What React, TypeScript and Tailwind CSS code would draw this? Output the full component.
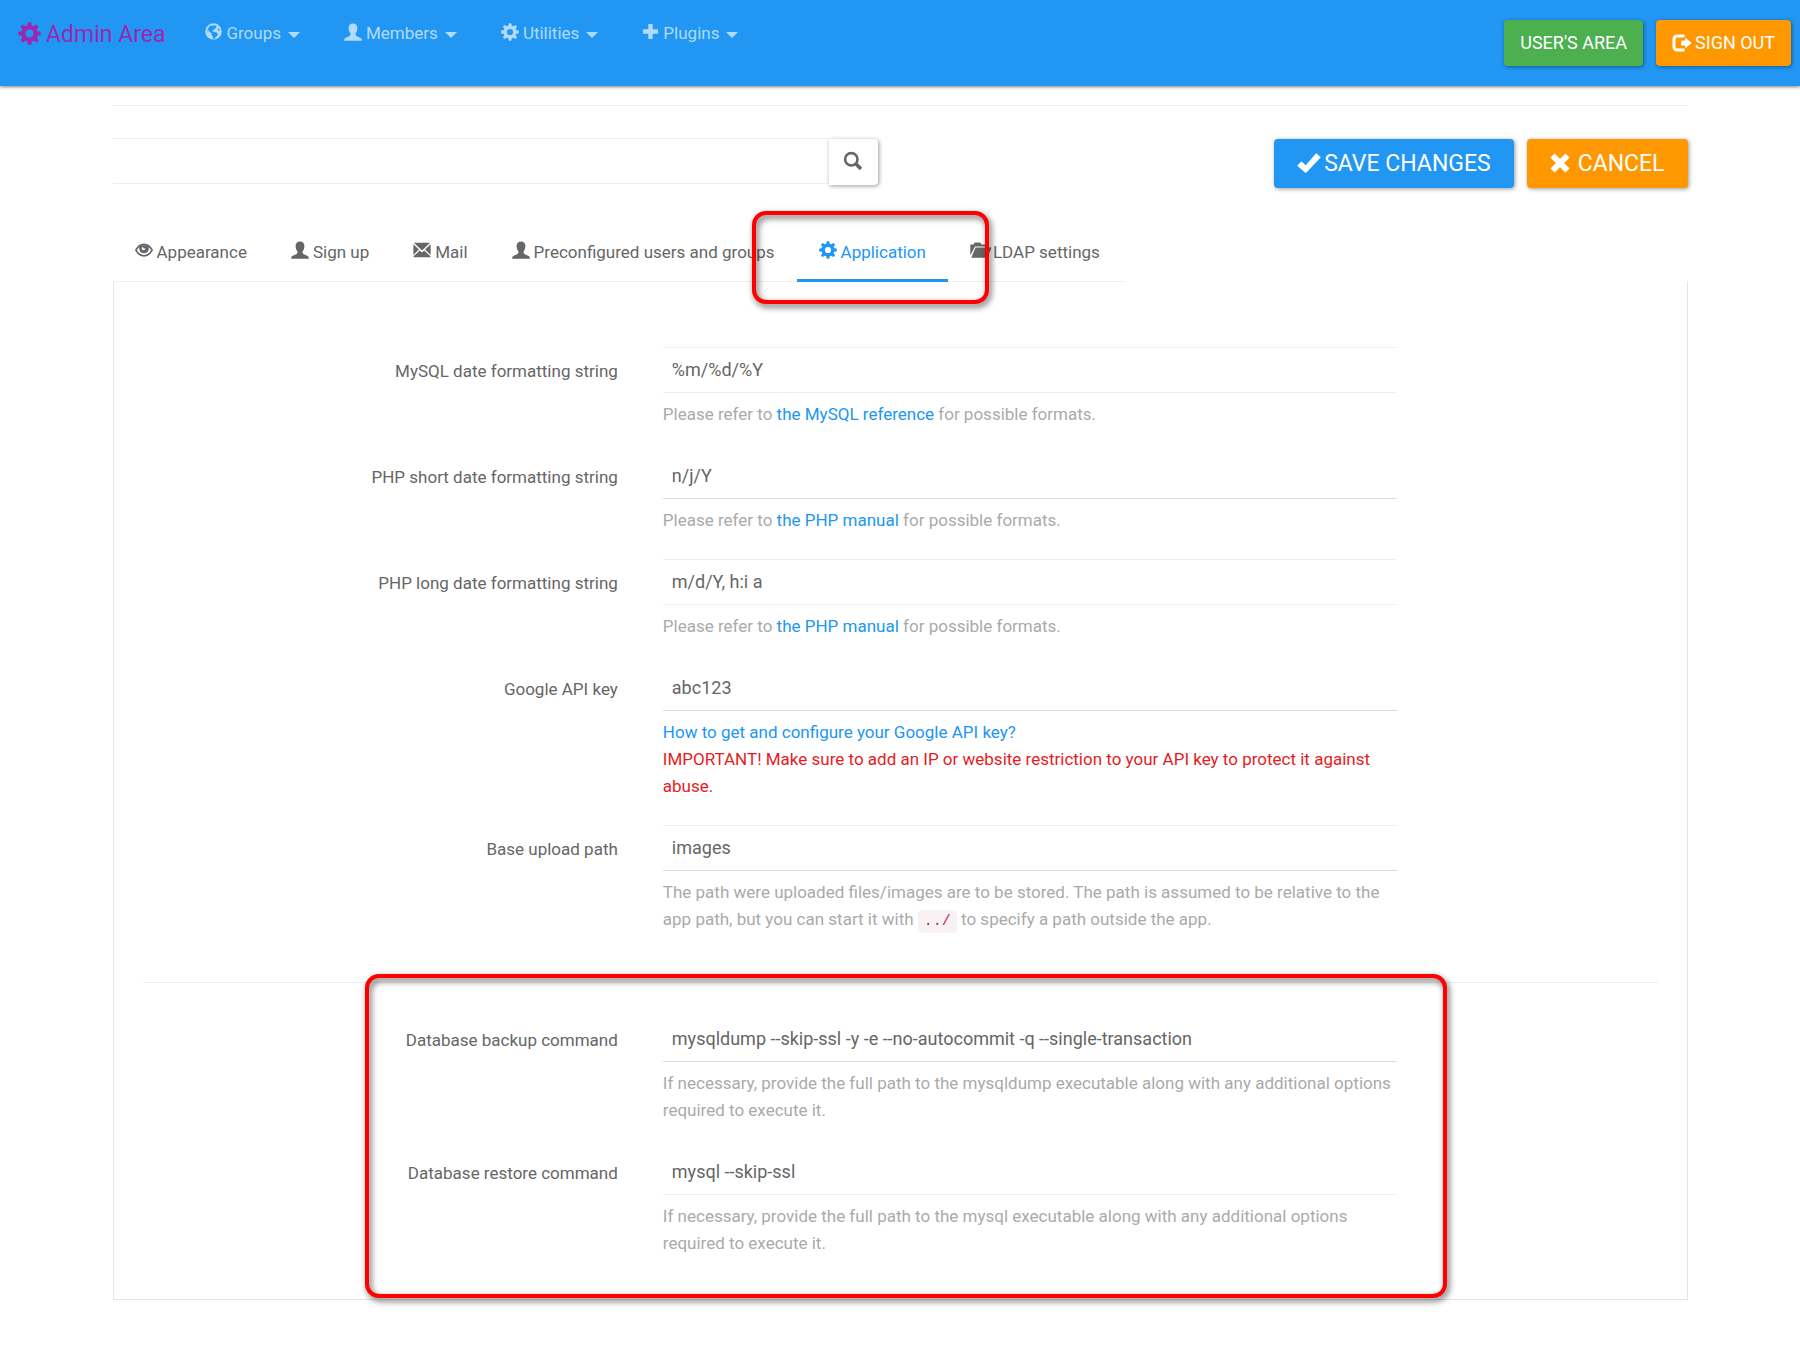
import React from "react";

type IconProps = { className?: string };

const TEETH = [0, 45, 90, 135, 180, 225, 270, 315];

function Gear({ className = "size-[18px]" }: IconProps) {
  return (
    <svg viewBox="0 0 18 18" className={className} fill="currentColor" aria-hidden="true">
      <circle cx="9" cy="9" r="4.8" fill="none" stroke="currentColor" strokeWidth="3.4" />
      {TEETH.map((a) => (
        <path key={a} d="M7 4 L7.6 .7 Q7.7 .2 8.2 .2 H9.8 Q10.3 .2 10.4 .7 L11 4 Z" transform={`rotate(${a} 9 9)`} />
      ))}
    </svg>
  );
}

function User() {
  return (
    <svg viewBox="0 0 18 18" className="size-[18px]" fill="currentColor" aria-hidden="true">
      <path d="M9 .4C6.2.4 4.6 2.2 4.6 5c0 2.2.6 4 1.8 5.200v1.300c0 .8-.4 1.300-1.200 1.700l-3.400 1.600C.7 15.300.2 15.900.2 17v.7h17.600V17c0-1.100-.5-1.700-1.600-2.200l-3.400-1.600c-.8-.4-1.200-.9-1.200-1.700v-1.300c1.200-1.200 1.800-3 1.800-5.200C13.400 2.200 11.800.4 9 .4z" />
    </svg>
  );
}

function Globe() {
  return (
    <svg viewBox="0 0 18 18" className="size-[17px]" aria-hidden="true">
      <circle cx="9" cy="9" r="8.700" fill="currentColor" />
      <path
        fill="#2196f3"
        d="M6.200 2.600l1.500.7 1.100-.9 1.300.6 1.500-.5.9 1.200-1 .6.3 1.200-1.600.3-.9 1.500-1.400.4.3 1.300 1.700.5 2.400.6 1.400 1.500-1.100 2.400-1.700 1-.6 1.800-1.600.3-.3-2.600-1.500-1.900.3-1.700-1.600-.8-1.300-1.700-1-1.800.2 2.600-.9-.4c-.1-2.300 1.300-5 3.600-6.200zM13.600 5.600l1.600 1 .5 2-1.300-.6-1-1.200z"
      />
    </svg>
  );
}

function Plus() {
  return (
    <svg viewBox="0 0 18 18" className="size-[17px]" fill="currentColor" aria-hidden="true">
      <path d="M7.200 1h3.600q.5 0 .5.500v5.200h5.200q.5 0 .5.500v3.600q0 .5-.5.500h-5.200v5.200q0 .5-.5.500H7.200q-.5 0-.5-.5v-5.200H1.500q-.5 0-.5-.5V7.200q0-.5.500-.5h5.200V1.500q0-.5.500-.5z" />
    </svg>
  );
}

function Eye() {
  return (
    <svg viewBox="0 0 18 18" className="size-[18px]" aria-hidden="true">
      <path
        d="M.9 9.200C2.600 5.900 5.500 3.300 9 3.300s6.400 2.600 8.100 5.900C15.400 12.500 12.500 14.800 9 14.800S2.600 12.500.9 9.200z"
        fill="none"
        stroke="currentColor"
        strokeWidth="1.700"
      />
      <path d="M4.700 4.300h8.600c1.300 3.600.4 8-4.300 8S3.400 7.900 4.700 4.300z" fill="currentColor" />
      <path d="M6.600 7.200l1.200-1.500 1 1.800 1.600-.2c0 1.200-.9 1.900-1.900 1.900s-1.900-.8-1.900-2z" fill="#fff" />
    </svg>
  );
}

function Mail() {
  return (
    <svg viewBox="0 0 18 18" className="size-[18px]" fill="currentColor" aria-hidden="true">
      <path d="M.9 1.700h16.200L9 9.600z" />
      <path d="M.4 3.200l5.500 5.400L.4 14z" />
      <path d="M17.600 3.200l-5.500 5.400 5.500 5.400z" />
      <path d="M.6 15.300L6.800 9.400 9 11.500l2.200-2.100 6.200 5.900v1H.6z" />
    </svg>
  );
}

function FolderOpen() {
  return (
    <svg viewBox="0 0 22 18" className="h-[18px] w-[22px]" fill="currentColor" aria-hidden="true">
      <path d="M.3 14.500V3.500h3.200l1.200-2h5.600l1.200 2h4.200v1.900H5z" />
      <path d="M5.500 6.400h16l-4.300 10.400H1.300z" />
    </svg>
  );
}

function SearchIcon() {
  return (
    <svg viewBox="0 0 20 20" className="size-5" fill="none" stroke="currentColor" aria-hidden="true">
      <circle cx="8.300" cy="8.300" r="6.200" strokeWidth="2.600" />
      <path d="M12.600 12.600l5.400 5.400" strokeWidth="3.600" />
    </svg>
  );
}

function LogOut() {
  return (
    <svg viewBox="0 0 20 18" className="h-[18px] w-5" aria-hidden="true">
      <path d="M12.500 2H5.500Q2 2 2 5.500v7Q2 16 5.500 16h7" fill="none" stroke="currentColor" strokeWidth="3" />
      <path d="M9.200 6.600h4V3.400L19.700 9l-6.500 5.600v-3.200h-4z" fill="currentColor" />
    </svg>
  );
}

function Check() {
  return (
    <svg viewBox="0 0 24 22" className="h-[22px] w-6" fill="currentColor" aria-hidden="true">
      <path d="M.5 13.200l3.600-3.500q.4-.4.800 0l3.800 3.600L18.900 1.600q.4-.4.800 0l3.700 3.300q.4.400 0 .8L9.200 20.800q-.4.400-.8 0L.5 14q-.4-.4 0-.8z" />
    </svg>
  );
}

function Remove() {
  return (
    <svg viewBox="0 0 20 20" className="size-5" aria-hidden="true">
      <path d="M2.500 2.500l15 15M17.500 2.500l-15 15" stroke="currentColor" strokeWidth="6" />
    </svg>
  );
}

function Callout({ className }: { className: string }) {
  return (
    <div
      aria-hidden="true"
      className={`pointer-events-none absolute z-10 rounded-[14px] border-4 border-[#ff0000] drop-shadow-[2px_3px_3px_rgba(0,0,0,0.65)] ${className}`}
    />
  );
}

const menus = [
  { label: "Groups", icon: <Globe /> },
  { label: "Members", icon: <User /> },
  { label: "Utilities", icon: <Gear /> },
  { label: "Plugins", icon: <Plus /> },
];

const tabs = [
  { label: "Appearance", icon: <Eye /> },
  { label: "Sign up", icon: <User /> },
  { label: "Mail", icon: <Mail /> },
  { label: "Preconfigured users and groups", icon: <User /> },
  { label: "Application", icon: <Gear />, active: true },
  { label: "LDAP settings", icon: <FolderOpen />, tight: true },
];

function Field({
  id,
  label,
  value,
  lines,
  children,
}: {
  id: string;
  label: string;
  value: string;
  lines: string;
  children: React.ReactNode;
}) {
  return (
    <div className="mb-[25px] grid grid-cols-[475fr_734fr_215fr] gap-x-[45px]">
      <label htmlFor={id} className="pt-[11px] text-right">
        {label}
      </label>
      <div>
        <input
          id={id}
          type="text"
          defaultValue={value}
          className={`block h-[46px] w-full border-y bg-transparent px-[9px] pb-px text-lg outline-none ${lines}`}
        />
        <p className="mt-2 text-[#aaaaaa]">{children}</p>
      </div>
    </div>
  );
}

function Link({ children }: { children: React.ReactNode }) {
  return (
    <a href="#" className="text-[#2196f3]">
      {children}
    </a>
  );
}

export default function App() {
  return (
    <div className="min-h-screen bg-white font-['Roboto',sans-serif] text-[17px] leading-[27px] text-[#666666]">
      <header className="flex h-[86px] items-start bg-[#2196f3] pr-[9px] pl-[18px] shadow-[0_1px_3px_rgba(0,0,0,0.5)]">
        <a href="#" className="flex items-center gap-[5px] pt-5 text-[23px] leading-[30px] text-[#9c27b0]">
          <Gear className="mb-1 size-[23px]" />
          Admin Area
        </a>
        <nav className="ml-[18px] flex pt-5">
          {menus.map((m) => (
            <button key={m.label} type="button" className="flex items-center px-[22px] text-[#b2dbfb]">
              <span className="pb-1">{m.icon}</span>
              <span className="ml-1">{m.label}</span>
              <svg viewBox="0 0 12 6" className="mt-0.5 ml-[7px] h-1.5 w-3" fill="currentColor" aria-hidden="true">
                <path d="M0 0h12L6 6z" />
              </svg>
            </button>
          ))}
        </nav>
        <div className="ml-auto flex gap-[13px] pt-5 text-lg text-white">
          <button type="button" className="h-[46px] rounded bg-[#4caf50] px-4 shadow-[1px_1px_4px_rgba(0,0,0,0.4)]">
            USER'S AREA
          </button>
          <button
            type="button"
            className="flex h-[46px] items-center gap-[3px] rounded bg-[#ff9800] px-4 shadow-[1px_1px_4px_rgba(0,0,0,0.4)]"
          >
            <LogOut />
            SIGN OUT
          </button>
        </div>
      </header>

      <main className="mx-auto w-7/8 pt-[19px]">
        <hr className="border-[#eeeeee]" />
        <div className="mt-8 flex items-start justify-between">
          <form className="flex w-[765px] items-start" onSubmit={(e) => e.preventDefault()}>
            <input
              type="search"
              aria-label="Search settings"
              className="h-[46px] min-w-0 flex-1 border-y border-[#eeeeee] px-[9px] text-lg outline-none"
            />
            <button
              type="submit"
              aria-label="Search"
              className="mt-px flex h-[46px] w-[49px] items-center justify-center rounded-r bg-white pb-0.5 shadow-[1px_1px_4px_rgba(0,0,0,0.4)]"
            >
              <SearchIcon />
            </button>
          </form>
          <div className="mt-px flex gap-[13px] text-[23px] text-white">
            <button
              type="button"
              className="flex h-[49px] items-center gap-[3px] rounded bg-[#2196f3] px-[23px] pb-px shadow-[1px_1px_4px_rgba(0,0,0,0.4)]"
            >
              <Check />
              SAVE CHANGES
            </button>
            <button
              type="button"
              className="flex h-[49px] items-center gap-2 rounded bg-[#ff9800] px-[23px] pb-px shadow-[1px_1px_4px_rgba(0,0,0,0.4)]"
            >
              <Remove />
              CANCEL
            </button>
          </div>
        </div>

        <div role="tablist" className="mt-[38px] flex w-fit">
          {tabs.map((t) => (
            <div key={t.label} className="relative">
              <button
                type="button"
                role="tab"
                aria-selected={!!t.active}
                className={`flex h-14 pt-[13px] pl-[22px] whitespace-nowrap ${t.tight ? "gap-px pr-6" : "gap-1 pr-[22px]"} ${
                  t.active ? "border-b-3 border-[#2196f3] text-[#2196f3]" : "border-b border-[#eeeeee]"
                }`}
              >
                <span className="pt-0.5">{t.icon}</span>
                {t.label}
              </button>
              {t.active && <Callout className="top-[-15px] right-[-41px] bottom-[-22px] left-[-45px]" />}
            </div>
          ))}
        </div>

        <section className="-mt-px border border-t-0 border-[#e5e5e5] px-[29px] pt-[66px] pb-[17px]">
          <Field id="mysql-date" label="MySQL date formatting string" value="%m/%d/%Y" lines="border-[#eeeeee]">
            Please refer to <Link>the MySQL reference</Link> for possible formats.
          </Field>
          <Field
            id="php-short"
            label="PHP short date formatting string"
            value="n/j/Y"
            lines="border-t-transparent border-b-[#dddddd]"
          >
            Please refer to <Link>the PHP manual</Link> for possible formats.
          </Field>
          <Field id="php-long" label="PHP long date formatting string" value="m/d/Y, h:i a" lines="border-[#eeeeee]">
            Please refer to <Link>the PHP manual</Link> for possible formats.
          </Field>
          <Field
            id="google-key"
            label="Google API key"
            value="abc123"
            lines="border-t-transparent border-b-[#dddddd]"
          >
            <Link>How to get and configure your Google API key?</Link>
            <br />
            <span className="text-[#e51c23]">
              IMPORTANT! Make sure to add an IP or website restriction to your API key to protect it against abuse.
            </span>
          </Field>
          <Field
            id="upload-path"
            label="Base upload path"
            value="images"
            lines="border-t-[#eeeeee] border-b-[#dddddd]"
          >
            The path were uploaded files/images are to be stored. The path is assumed to be relative to the app path,
            but you can start it with{" "}
            <code className="inline-block rounded bg-[#f9f2f4] px-1.5 font-['Liberation_Mono',monospace] text-[15px] leading-[23px] text-[#c7254e]">
              ../
            </code>{" "}
            to specify a path outside the app.
          </Field>
          <hr className="mt-[49px] mb-[33px] border-[#eeeeee]" />
          <div className="relative">
            <Field
              id="db-backup"
              label="Database backup command"
              value="mysqldump --skip-ssl -y -e --no-autocommit -q --single-transaction"
              lines="border-t-transparent border-b-[#dddddd]"
            >
              If necessary, provide the full path to the mysqldump executable along with any additional options
              required to execute it.
            </Field>
            <Field
              id="db-restore"
              label="Database restore command"
              value="mysql --skip-ssl"
              lines="border-t-transparent border-b-[#eeeeee]"
            >
              If necessary, provide the full path to the mysql executable along with any additional options required
              to execute it.
            </Field>
            <Callout className="top-[-42px] right-[211px] bottom-[-41px] left-[222px]" />
          </div>
        </section>
      </main>
    </div>
  );
}
